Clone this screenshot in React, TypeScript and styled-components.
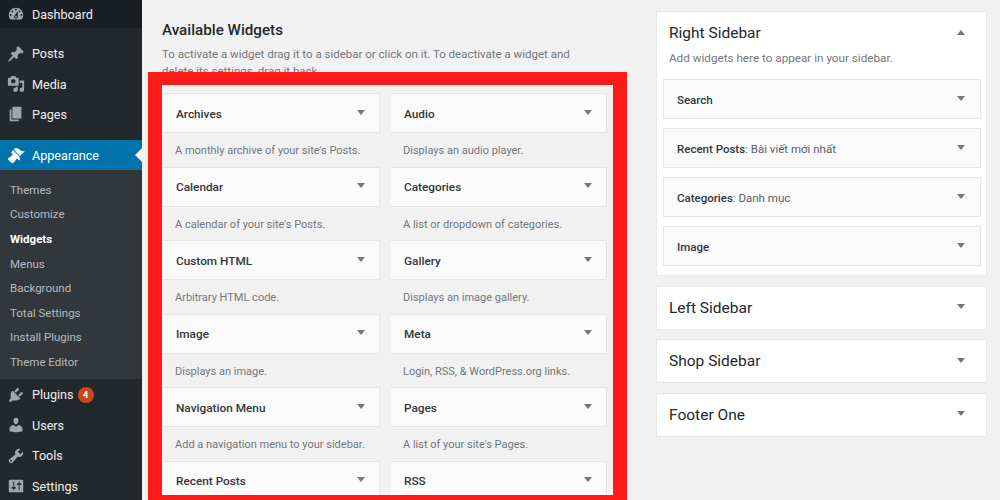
import styled, { createGlobalStyle } from "styled-components";

const GlobalStyle = createGlobalStyle`
  html, body { margin: 0; padding: 0; }
  body {
    width: 1000px;
    height: 500px;
    overflow: hidden;
    background: #f1f1f1;
    font-family: Roboto, "Open Sans", sans-serif;
  }
  * { box-sizing: border-box; }
`;

// ─── Icons (dashicons) ────────────────────────────────────────────────────────

const ICONS: Record<string, string> = {
  dashboard:
    "M3.76 16h12.48c1.1-1.37 1.76-3.11 1.76-5 0-4.42-3.58-8-8-8s-8 3.58-8 8c0 1.89.66 3.63 1.76 5zM10 4c.55 0 1 .45 1 1s-.45 1-1 1-1-.45-1-1 .45-1 1-1zM6 6c.55 0 1 .45 1 1s-.45 1-1 1-1-.45-1-1 .45-1 1-1zm8 0c.55 0 1 .45 1 1s-.45 1-1 1-1-.45-1-1 .45-1 1-1zm-5.37 5.55L12 7v6c0 1.1-.9 2-2 2s-2-.9-2-2c0-.57.24-1.08.63-1.45zM4 10c.55 0 1 .45 1 1s-.45 1-1 1-1-.45-1-1 .45-1 1-1zm12 0c.55 0 1 .45 1 1s-.45 1-1 1-1-.45-1-1 .45-1 1-1zm-5 3c0-.55-.45-1-1-1s-1 .45-1 1 .45 1 1 1 1-.45 1-1z",
  posts:
    "M10.44 3.02l1.82-1.82 6.36 6.35-1.83 1.82c-1.05-.68-2.48-.57-3.41.36l-.75.75c-.92.93-1.04 2.35-.35 3.41l-1.83 1.82-2.41-2.41-2.8 2.79c-.42.42-3.38 2.71-3.8 2.29s1.86-3.39 2.28-3.81l2.79-2.79L4.1 9.36l1.83-1.82c1.05.69 2.48.57 3.4-.36l.75-.75c.93-.92 1.05-2.35.36-3.41z",
  media:
    "M13 11V4c0-.55-.45-1-1-1h-1.67L9 1H5L3.67 3H2c-.55 0-1 .45-1 1v7c0 .55.45 1 1 1h10c.55 0 1-.45 1-1zM7 4.5c1.38 0 2.5 1.12 2.5 2.5S8.38 9.5 7 9.5 4.5 8.38 4.5 7 5.62 4.5 7 4.5zM14 6h5v10.5c0 1.38-1.12 2.5-2.5 2.5S14 17.88 14 16.5s1.12-2.5 2.5-2.5c.17 0 .34.02.5.05V9h-3V6zm-4 8.05V13h2v3.5c0 1.38-1.12 2.5-2.5 2.5S7 17.88 7 16.5 8.12 14 9.5 14c.17 0 .34.02.5.05z",
  pages: "M6 15V2h10v13H6zm-1 1h8v2H3V5h2v11z",
  appearance:
    "M14.48 11.06L7.41 3.99l1.5-1.5c.5-.56 2.3-.47 3.51.32 1.21.8 1.43 1.28 2.91 2.1 1.18.64 2.45 1.26 4.45.85zm-.71.71L6.7 4.7 4.93 6.47c-.39.39-.39 1.02 0 1.41l1.06 1.06c.39.39.39 1.03 0 1.42-.6.6-1.43 1.11-2.21 1.69-.35.26-.7.53-1.01.84C1.43 13.23.4 14.4 1.4 15.3l3.3 3.3c.9.99 2.2.08 3.33-.81.31-.31.58-.66.84-1.01.58-.78 1.09-1.61 1.69-2.21.39-.39 1.03-.39 1.42 0l1.06 1.06c.39.39 1.02.39 1.41 0z",
  plugins:
    "M13.11 4.36L9.87 7.6 8 5.73l3.24-3.24c.35-.34 1.05-.2 1.56.32.52.51.66 1.21.31 1.55zm-8 1.77l.91-1.12 9.01 9.01-1.19.84c-.71.71-2.63 1.16-3.82 1.16H6.14L4.9 17.26c-.59.59-1.54.59-2.12 0-.59-.58-.59-1.53 0-2.12l1.24-1.24v-3.88c0-1.13.4-3.19 1.09-3.89zm7.26 3.97l3.24-3.24c.34-.35 1.04-.21 1.55.31.52.51.66 1.21.31 1.55l-3.24 3.25z",
  users:
    "M10 9.25c-2.27 0-2.73-3.44-2.73-3.44C7 4.02 7.82 2 9.97 2c2.16 0 2.98 2.02 2.71 3.81 0 0-.41 3.44-2.68 3.44zm0 2.57L12.72 10c2.39 0 4.52 2.33 4.52 4.53v2.49s-3.65 1.13-7.24 1.13c-3.65 0-7.24-1.13-7.24-1.13v-2.49c0-2.25 1.94-4.48 4.47-4.48z",
  tools:
    "M16.68 9.77c-1.34 1.34-3.3 1.67-4.95.99l-5.41 6.52c-.99.99-2.59.99-3.58 0s-.99-2.59 0-3.57l6.52-5.42c-.68-1.65-.35-3.61.99-4.95 1.28-1.28 3.12-1.62 4.72-1.06l-2.89 2.89 2.82 2.82 2.86-2.87c.53 1.58.18 3.39-1.08 4.65zM3.81 16.21c.4.39 1.04.39 1.43 0 .4-.4.4-1.04 0-1.43-.39-.4-1.03-.4-1.43 0-.39.39-.39 1.03 0 1.43z",
  settings:
    "M18 16V4c0-.55-.45-1-1-1H3c-.55 0-1 .45-1 1v12c0 .55.45 1 1 1h14c.55 0 1-.45 1-1zM8 11h1c.55 0 1 .45 1 1s-.45 1-1 1H8v1.5c0 .28-.22.5-.5.5s-.5-.22-.5-.5V13H6c-.55 0-1-.45-1-1s.45-1 1-1h1V5.5c0-.28.22-.5.5-.5s.5.22.5.5V11zm5-2h-1c-.55 0-1-.45-1-1s.45-1 1-1h1V5.5c0-.28.22-.5.5-.5s.5.22.5.5V7h1c.55 0 1 .45 1 1s-.45 1-1 1h-1v5.5c0 .28-.22.5-.5.5s-.5-.22-.5-.5V9z",
};

// ─── Styled Components ────────────────────────────────────────────────────────

const Page = styled.div`
  width: 1000px;
  height: 500px;
  display: flex;
  overflow: hidden;
`;

const Sidebar = styled.nav`
  width: 142px;
  height: 500px;
  flex: none;
  background: #23282d;
  overflow: hidden;
`;

const MenuItem = styled.div<{ $active?: boolean }>`
  position: relative;
  height: 30.4px;
  display: flex;
  align-items: center;
  padding: 1px 0 0 7px;
  font-size: 12.6px;
  color: ${(p) => (p.$active ? "#fff" : "#eee")};
  background: ${(p) => (p.$active ? "#0073aa" : "transparent")};

  svg {
    width: 18px;
    height: 18px;
    margin-right: 7px;
    fill: ${(p) => (p.$active ? "#fff" : "#a0a5aa")};
  }

  ${(p) =>
    p.$active &&
    `&::after {
      content: "";
      position: absolute;
      right: 0;
      top: 8px;
      border: 7px solid transparent;
      border-right-color: #f1f1f1;
      border-left-width: 0;
    }`}
`;

const TopGroup = styled.div`
  height: 28px;
  background: #191e23;
  margin-bottom: 10px;

  ${MenuItem} {
    height: 28px;
    padding-top: 0;
  }
`;

const MenuGroup = styled.div`
  padding-bottom: 10.6px;
`;

const Submenu = styled.div`
  background: #32373c;
  padding: 7.3px 0 5px;
`;

const SubItem = styled.div<{ $current?: boolean }>`
  height: 24.6px;
  display: flex;
  align-items: center;
  padding-left: 10px;
  font-size: 11.5px;
  color: ${(p) => (p.$current ? "#fff" : "rgba(240, 245, 250, 0.7)")};
  font-weight: ${(p) => (p.$current ? 700 : 400)};
`;

const Badge = styled.span`
  width: 16px;
  height: 16px;
  margin-left: 4px;
  border-radius: 50%;
  background: #ca4a1f;
  color: #fff;
  font-size: 9px;
  font-weight: 700;
  display: flex;
  align-items: center;
  justify-content: center;
`;

const Main = styled.main`
  width: 485px;
  flex: none;
  padding: 0 0 0 6px;
`;

const Heading = styled.h3`
  margin: 0;
  padding: 20px 0 0 14px;
  height: 46px;
  font-size: 15.2px;
  line-height: 20px;
  font-weight: 500;
  color: #23282d;
`;

const Intro = styled.p`
  margin: 0;
  padding: 0 0 0 14px;
  height: 26px;
  overflow: hidden;
  font-size: 11.5px;
  line-height: 17px;
  color: #72777c;
  white-space: nowrap;
`;

const RedFrame = styled.section`
  width: 479px;
  height: 428px;
  border: solid #ff1a1a;
  border-width: 13px 14px 5px 14px;
  background: #f1f1f1;
  overflow: hidden;
`;

const WidgetGrid = styled.div`
  display: grid;
  grid-template-columns: 218px 217px;
  column-gap: 10px;
  padding-top: 8px;
`;

const WidgetCell = styled.div`
  height: 73.5px;
`;

const Arrow = styled.span<{ $up?: boolean }>`
  width: 0;
  height: 0;
  margin-top: -2px;
  border-left: 4px solid transparent;
  border-right: 4px solid transparent;
  ${(p) =>
    p.$up
      ? "border-bottom: 5px solid #72777c;"
      : "border-top: 5px solid #72777c;"}
`;

const WidgetCard = styled.div`
  height: 40px;
  background: #fafafa;
  border: 1px solid #e5e5e5;
  border-left-color: #f1f1f1;
  display: flex;
  align-items: center;
  justify-content: space-between;
  padding: 1px 14px 0 13px;
  font-size: 11.8px;
  font-weight: 500;
  color: #32373c;

  ${Arrow} {
    margin-top: -3px;
  }
`;

const WidgetDesc = styled.p`
  margin: 0;
  padding: 10px 0 0 13px;
  font-size: 11px;
  line-height: 16px;
  color: #72777c;
  white-space: nowrap;
`;

const RightColumn = styled.aside`
  width: 331px;
  margin-left: 29px;
  padding-top: 11px;
  display: flex;
  flex-direction: column;
  gap: 9.5px;
`;

const Panel = styled.div`
  background: #fff;
  border: 1px solid #e8e8e8;
`;

const PanelHead = styled.div`
  height: 42px;
  display: flex;
  align-items: center;
  justify-content: space-between;
  padding: 0 21px 0 12px;
  font-size: 15.5px;
  font-weight: 400;
  color: #23282d;
`;

const PanelHint = styled.p`
  margin: -4px 0 0;
  padding: 0 0 13px 12px;
  font-size: 11.7px;
  line-height: 16px;
  color: #72777c;
`;

const SidebarWidgets = styled.div`
  display: flex;
  flex-direction: column;
  gap: 9px;
  padding: 0 5px 9px 6px;
`;

const SidebarWidget = styled.div`
  height: 40px;
  background: #fafafa;
  border: 1px solid #e5e5e5;
  display: flex;
  align-items: center;
  justify-content: space-between;
  padding: 2px 15px 0 13px;
  font-size: 11.5px;
  font-weight: 500;
  color: #32373c;

  ${Arrow} {
    margin-top: -4px;
  }
`;

const WidgetTitleExtra = styled.span`
  font-weight: 400;
  color: #555d66;
`;

// ─── Data ─────────────────────────────────────────────────────────────────────

const WIDGETS = [
  ["Archives", "A monthly archive of your site's Posts."],
  ["Audio", "Displays an audio player."],
  ["Calendar", "A calendar of your site's Posts."],
  ["Categories", "A list or dropdown of categories."],
  ["Custom HTML", "Arbitrary HTML code."],
  ["Gallery", "Displays an image gallery."],
  ["Image", "Displays an image."],
  ["Meta", "Login, RSS, & WordPress.org links."],
  ["Navigation Menu", "Add a navigation menu to your sidebar."],
  ["Pages", "A list of your site's Pages."],
  ["Recent Posts", ""],
  ["RSS", ""],
];

const SUBMENU = [
  "Themes",
  "Customize",
  "Widgets",
  "Menus",
  "Background",
  "Total Settings",
  "Install Plugins",
  "Theme Editor",
];

function Icon({ name }: { name: string }) {
  return (
    <svg viewBox="0 0 20 20">
      <path d={ICONS[name]} />
    </svg>
  );
}

// ─── Component ────────────────────────────────────────────────────────────────

export default function App() {
  return (
    <Page>
      <GlobalStyle />
      <Sidebar>
        <TopGroup>
          <MenuItem>
            <Icon name="dashboard" />
            Dashboard
          </MenuItem>
        </TopGroup>
        <MenuGroup>
          <MenuItem>
            <Icon name="posts" />
            Posts
          </MenuItem>
          <MenuItem>
            <Icon name="media" />
            Media
          </MenuItem>
          <MenuItem>
            <Icon name="pages" />
            Pages
          </MenuItem>
        </MenuGroup>
        <MenuItem $active>
          <Icon name="appearance" />
          Appearance
        </MenuItem>
        <Submenu>
          {SUBMENU.map((label) => (
            <SubItem key={label} $current={label === "Widgets"}>
              {label}
            </SubItem>
          ))}
        </Submenu>
        <MenuItem>
          <Icon name="plugins" />
          Plugins
          <Badge>4</Badge>
        </MenuItem>
        <MenuItem>
          <Icon name="users" />
          Users
        </MenuItem>
        <MenuItem>
          <Icon name="tools" />
          Tools
        </MenuItem>
        <MenuItem>
          <Icon name="settings" />
          Settings
        </MenuItem>
      </Sidebar>

      <Main>
        <Heading>Available Widgets</Heading>
        <Intro>
          To activate a widget drag it to a sidebar or click on it. To deactivate a widget and
          <br />
          delete its settings, drag it back.
        </Intro>
        <RedFrame>
          <WidgetGrid>
            {WIDGETS.map(([title, desc]) => (
              <WidgetCell key={title}>
                <WidgetCard>
                  {title}
                  <Arrow />
                </WidgetCard>
                {desc && <WidgetDesc>{desc}</WidgetDesc>}
              </WidgetCell>
            ))}
          </WidgetGrid>
        </RedFrame>
      </Main>

      <RightColumn>
        <Panel>
          <PanelHead>
            Right Sidebar
            <Arrow $up />
          </PanelHead>
          <PanelHint>Add widgets here to appear in your sidebar.</PanelHint>
          <SidebarWidgets>
            <SidebarWidget>
              Search
              <Arrow />
            </SidebarWidget>
            <SidebarWidget>
              <span>
                Recent Posts<WidgetTitleExtra>: Bài viết mới nhất</WidgetTitleExtra>
              </span>
              <Arrow />
            </SidebarWidget>
            <SidebarWidget>
              <span>
                Categories<WidgetTitleExtra>: Danh mục</WidgetTitleExtra>
              </span>
              <Arrow />
            </SidebarWidget>
            <SidebarWidget>
              Image
              <Arrow />
            </SidebarWidget>
          </SidebarWidgets>
        </Panel>
        <Panel>
          <PanelHead>
            Left Sidebar
            <Arrow />
          </PanelHead>
        </Panel>
        <Panel>
          <PanelHead>
            Shop Sidebar
            <Arrow />
          </PanelHead>
        </Panel>
        <Panel>
          <PanelHead>
            Footer One
            <Arrow />
          </PanelHead>
        </Panel>
      </RightColumn>
    </Page>
  );
}
